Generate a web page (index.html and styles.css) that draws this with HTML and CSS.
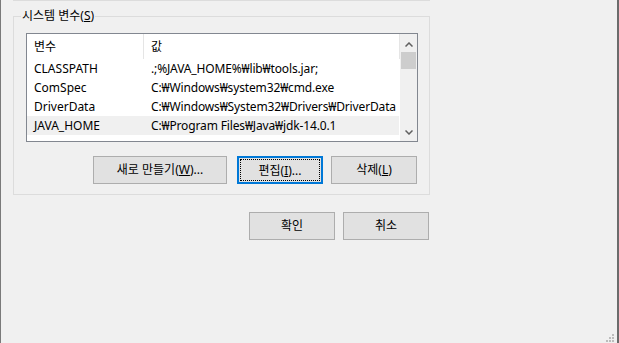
FILE: index.html
```html
<!DOCTYPE html>
<html lang="ko">
<head>
  <meta charset="UTF-8">
  <title>환경 변수</title>
  <link rel="stylesheet" href="styles.css">
</head>
<body>
  <div class="window">
    <div class="prev-group"></div>

    <fieldset class="group">
      <legend>시스템 변수(<u>S</u>)</legend>
      <div class="list">
        <div class="list-body">
          <div class="list-head">
            <div class="col name">변수</div>
            <div class="col value">값</div>
          </div>
          <div class="row"><div class="col name">CLASSPATH</div><div class="col value">.;%JAVA_HOME%₩lib₩tools.jar;</div></div>
          <div class="row"><div class="col name">ComSpec</div><div class="col value">C:₩Windows₩system32₩cmd.exe</div></div>
          <div class="row"><div class="col name">DriverData</div><div class="col value">C:₩Windows₩System32₩Drivers₩DriverData</div></div>
          <div class="row selected"><div class="col name">JAVA_HOME</div><div class="col value">C:₩Program Files₩Java₩jdk-14.0.1</div></div>
        </div>
        <div class="scrollbar">
          <div class="arrow up">
            <svg width="8" height="5" viewBox="0 0 8 5"><polyline points="0.5,4.5 4,1 7.5,4.5" fill="none" stroke="#606060" stroke-width="1.5"/></svg>
          </div>
          <div class="thumb"></div>
          <div class="track"></div>
          <div class="arrow down">
            <svg width="8" height="5" viewBox="0 0 8 5"><polyline points="0.5,0.5 4,4 7.5,0.5" fill="none" stroke="#606060" stroke-width="1.5"/></svg>
          </div>
        </div>
      </div>
      <div class="buttons">
        <button class="btn wide">새로 만들기(<u>W</u>)...</button>
        <button class="btn focus">편집(<u>I</u>)...</button>
        <button class="btn">삭제(<u>L</u>)</button>
      </div>
    </fieldset>

    <div class="dialog-buttons">
      <button class="btn">확인</button>
      <button class="btn">취소</button>
    </div>

    <svg class="grip" width="8" height="8" viewBox="0 0 8 8">
      <rect x="6" y="0" width="2" height="2"/>
      <rect x="3" y="3" width="2" height="2"/>
      <rect x="6" y="3" width="2" height="2"/>
      <rect x="0" y="6" width="2" height="2"/>
      <rect x="3" y="6" width="2" height="2"/>
      <rect x="6" y="6" width="2" height="2"/>
    </svg>
  </div>
</body>
</html>
```

FILE: styles.css
```css
* { box-sizing: border-box; }
body {
  margin: 0;
  background: #f0f0f0;
  font-family: "Noto Sans", "Noto Sans CJK KR", sans-serif;
  font-size: 12px;
  color: #000;
}
.window {
  position: relative;
  height: 343px;
  border-left: 1px solid #7a7a7a;
  border-right: 2px solid #6b6b6b;
  overflow: hidden;
}
.prev-group {
  margin-left: 12px;
  width: 417px;
  height: 1px;
  border-bottom: 1px solid #dcdcdc;
}

/* group box */
.group {
  margin: 7px 0 0 12px;
  width: 417px;
  min-width: 0;
  padding: 9px 11px 10px 12px;
  border: 1px solid #dcdcdc;
}
.group legend {
  padding: 0 1px;
  margin-left: -5px;
  line-height: 16px;
}

/* list view */
.list {
  display: flex;
  height: 109px;
  border: 1px solid #828790;
  background: #fff;
}
.list-body { width: 373px; }
.list-head { display: flex; height: 25px; }
.list-head .col { line-height: 25px; border-right: 1px solid #e5e5e5; }
.col { white-space: nowrap; overflow: hidden; }
.col.name { width: 117px; flex: none; padding-left: 7px; }
.col.value { flex: 1; padding-left: 7px; }
.row { display: flex; width: 372px; height: 19px; line-height: 19px; }
.row .col.value { letter-spacing: -0.14px; }
.row.selected { background: #f0f0f0; }

.scrollbar {
  width: 17px;
  display: flex;
  flex-direction: column;
  background: #f0f0f0;
}
.arrow { height: 17px; display: flex; align-items: center; justify-content: center; }
.arrow.up { height: 18px; padding-top: 2px; }
.arrow svg { display: block; }
.thumb { width: 15px; height: 17px; margin-left: 1px; background: #cdcdcd; }
.track { flex: 1; }

/* buttons */
.btn {
  height: 28px;
  width: 86px;
  padding: 0;
  background: #e1e1e1;
  border: 1px solid #adadad;
  border-radius: 0;
  font: inherit;
  color: #000;
  line-height: 26px;
  text-align: center;
}
.buttons {
  display: flex;
  justify-content: flex-end;
  margin-top: 14px;
  padding-right: 1px;
}
.btn.wide { width: 134px; margin-right: 10px; }
.btn.focus {
  position: relative;
  border: 2px solid #0078d7;
  margin-right: 8px;
}
.btn.focus::after {
  content: "";
  position: absolute;
  inset: 1px;
  border: 1px dotted #000;
}
.dialog-buttons {
  display: flex;
  justify-content: flex-end;
  gap: 8px;
  width: 416px;
  margin: 17px 0 0 12px;
}

.grip {
  position: absolute;
  right: 3px;
  bottom: 1px;
  fill: #bcbcbc;
}
```
